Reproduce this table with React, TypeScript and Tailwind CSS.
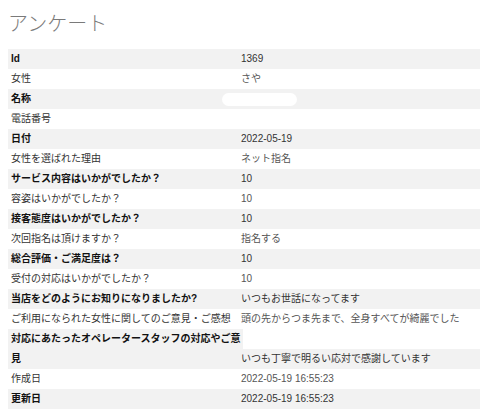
const rows: { label: string; value: string }[] = [
  { label: "Id", value: "1369" },
  { label: "女性", value: "さや" },
  { label: "名称", value: "" },
  { label: "電話番号", value: "" },
  { label: "日付", value: "2022-05-19" },
  { label: "女性を選ばれた理由", value: "ネット指名" },
  { label: "サービス内容はいかがでしたか？", value: "10" },
  { label: "容姿はいかがでしたか？", value: "10" },
  { label: "接客態度はいかがでしたか？", value: "10" },
  { label: "次回指名は頂けますか？", value: "指名する" },
  { label: "総合評価・ご満足度は？", value: "10" },
  { label: "受付の対応はいかがでしたか？", value: "10" },
  { label: "当店をどのようにお知りになりましたか?", value: "いつもお世話になってます" },
  { label: "ご利用になられた女性に関してのご意見・ご感想", value: "頭の先からつま先まで、全身すべてが綺麗でした" },
];

function Row({ label, value, striped }: { label: string; value: string; striped: boolean }) {
  return (
    <div className={`flex h-5 items-center ${striped ? "bg-[#f2f2f2]" : "bg-white"}`}>
      <div
        className={`w-[230px] shrink-0 whitespace-nowrap pl-[3px] ${
          striped ? "font-bold text-[#111]" : "text-[#333]"
        }`}
      >
        {label}
      </div>
      <div className={`relative flex-1 whitespace-nowrap pl-[3px] ${striped ? "text-[#333]" : "text-[#555]"}`}>
        {label === "名称" ? (
          <span className="absolute -left-[16px] -top-[6px] h-[13px] w-[75px] rounded-full bg-white" />
        ) : (
          value
        )}
      </div>
    </div>
  );
}

export default function App() {
  return (
    <div
      className="min-h-screen bg-white pl-2 pt-[10px]"
      style={{ fontFamily: '"Liberation Sans", "Noto Sans CJK JP", sans-serif' }}
    >
      <h1 className="mb-[11px] text-[20px] font-light leading-[28px] text-[#7a7a7a]">アンケート</h1>

      <div className="text-[10px] leading-5">
        {rows.map((r, i) => (
          <Row key={r.label} label={r.label} value={r.value} striped={i % 2 === 0} />
        ))}

        {/* label wraps onto a second line here */}
        <div className="flex">
          <div className="w-[235px] shrink-0 whitespace-nowrap bg-[#f2f2f2] pl-[3px] font-bold text-[#111]">
            対応にあたったオペレータースタッフの対応やご意
            <br />
            見
          </div>
          <div className="flex flex-1 flex-col">
            <div className="h-5 bg-white" />
            <div className="-ml-[5px] h-5 whitespace-nowrap bg-[#f2f2f2] pl-[3px] text-[#333]">
              いつも丁寧で明るい応対で感謝しています
            </div>
          </div>
        </div>

        <Row label="作成日" value="2022-05-19 16:55:23" striped={false} />
        <Row label="更新日" value="2022-05-19 16:55:23" striped={true} />
      </div>
    </div>
  );
}
